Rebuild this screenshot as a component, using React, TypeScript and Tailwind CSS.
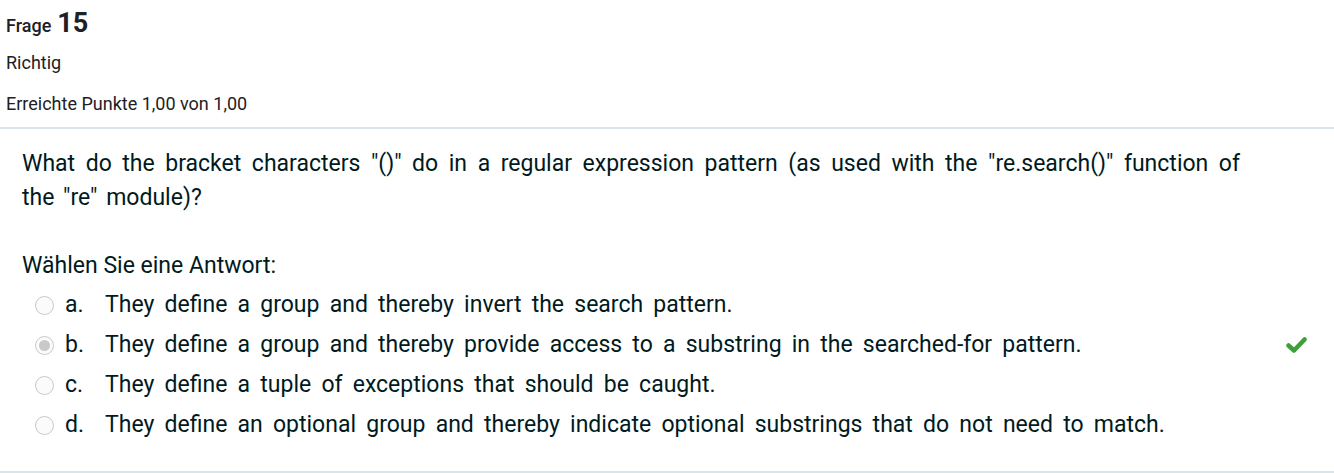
const options = [
  { letter: "a.", text: "They define a group and thereby invert the search pattern.", checked: false },
  { letter: "b.", text: "They define a group and thereby provide access to a substring in the searched-for pattern.", checked: true },
  { letter: "c.", text: "They define a tuple of exceptions that should be caught.", checked: false },
  { letter: "d.", text: "They define an optional group and thereby indicate optional substrings that do not need to match.", checked: false },
];

function Radio({ checked }: { checked: boolean }) {
  return (
    <span className="flex h-[19px] w-[19px] shrink-0 items-center justify-center rounded-full border border-[#c8c8c8] bg-[#fbfbfb]">
      {checked && <span className="h-[11px] w-[11px] rounded-full bg-[#c9c9c9]" />}
    </span>
  );
}

export default function App() {
  return (
    <div className="h-[473px] w-[1334px] overflow-hidden bg-white text-[#1d2125]" style={{ fontFamily: "Roboto, sans-serif" }}>
      {/* Info header */}
      <div className="flex h-[129px] flex-col border-b-2 border-[#d7e6ec] px-[6px] pt-[10px]">
        <h3 className="flex items-baseline gap-[6px] leading-none">
          <span className="text-[18px] font-medium">Frage</span>
          <span className="text-[27px] font-bold">15</span>
        </h3>
        <div className="mt-[17px] text-[18px] leading-none">Richtig</div>
        <div className="mt-[23px] text-[18px] leading-none">Erreichte Punkte 1,00 von 1,00</div>
      </div>

      {/* Question */}
      <div className="border-b-2 border-[#d7e6ec] pb-[26px] pl-[22px] pr-[94px] pt-[18px] text-[#001a1e]">
        <div className="text-[23px] leading-[34px]">
          <p className="text-justify [text-align-last:justify]">
            What do the bracket characters "()" do in a regular expression pattern (as used with the "re.search()" function of
          </p>
          <p className="[word-spacing:3px]">the "re" module)?</p>
        </div>
        <div className="mt-[36px] text-[23px] leading-[30px]">Wählen Sie eine Antwort:</div>
        <div className="mt-[4px] flex flex-col">
          {options.map((o) => (
            <div key={o.letter} className="flex h-[40px] items-center pl-[13px]">
              <Radio checked={o.checked} />
              <span className="ml-[11px] w-[40px] text-[23px]">{o.letter}</span>
              <span className="flex-1 text-[23px] [word-spacing:4.5px]">{o.text}</span>
              {o.checked && (
                <svg width="21" height="16" viewBox="0 0 21 16" className="-mr-[67px] ml-[40px]">
                  <path d="M2.5 8.5 L8 13.5 L18.5 2.5" fill="none" stroke="#3f9f3a" strokeWidth="4.5" strokeLinecap="round" strokeLinejoin="round" />
                </svg>
              )}
            </div>
          ))}
        </div>
      </div>
    </div>
  );
}
